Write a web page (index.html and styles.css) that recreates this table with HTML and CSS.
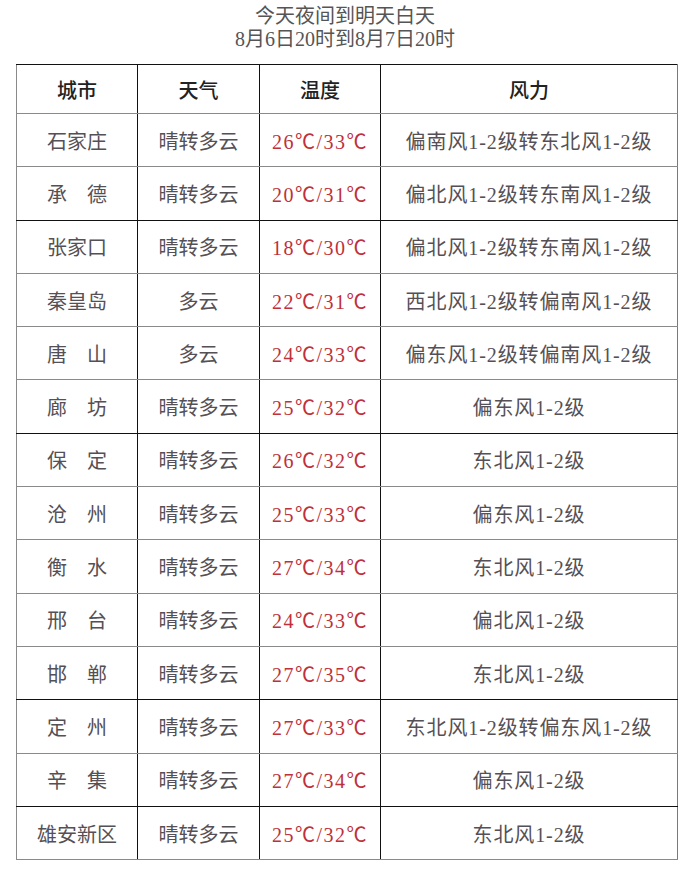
FILE: index.html
```html
<!DOCTYPE html>
<html lang="zh-CN">
<head>
<meta charset="utf-8">
<title>天气预报</title>
<link rel="stylesheet" href="styles.css">
</head>
<body>
<div class="title">
  <div class="line">今天夜间到明天白天</div>
  <div class="line">8月6日20时到8月7日20时</div>
</div>
<table class="wx">
  <colgroup><col class="c1"><col class="c2"><col class="c3"><col class="c4"></colgroup>
  <thead>
    <tr class="head"><th>城市</th><th>天气</th><th>温度</th><th>风力</th></tr>
  </thead>
  <tbody>
    <tr><td>石家庄</td><td>晴转多云</td><td class="t">26℃/33℃</td><td class="w">偏南风1-2级转东北风1-2级</td></tr>
    <tr class="dk"><td>承　德</td><td>晴转多云</td><td class="t">20℃/31℃</td><td class="w">偏北风1-2级转东南风1-2级</td></tr>
    <tr><td>张家口</td><td>晴转多云</td><td class="t">18℃/30℃</td><td class="w">偏北风1-2级转东南风1-2级</td></tr>
    <tr><td>秦皇岛</td><td>多云</td><td class="t">22℃/31℃</td><td class="w">西北风1-2级转偏南风1-2级</td></tr>
    <tr><td>唐　山</td><td>多云</td><td class="t">24℃/33℃</td><td class="w">偏东风1-2级转偏南风1-2级</td></tr>
    <tr class="dk"><td>廊　坊</td><td>晴转多云</td><td class="t">25℃/32℃</td><td class="w">偏东风1-2级</td></tr>
    <tr><td>保　定</td><td>晴转多云</td><td class="t">26℃/32℃</td><td class="w">东北风1-2级</td></tr>
    <tr><td>沧　州</td><td>晴转多云</td><td class="t">25℃/33℃</td><td class="w">偏东风1-2级</td></tr>
    <tr><td>衡　水</td><td>晴转多云</td><td class="t">27℃/34℃</td><td class="w">东北风1-2级</td></tr>
    <tr><td>邢　台</td><td>晴转多云</td><td class="t">24℃/33℃</td><td class="w">偏北风1-2级</td></tr>
    <tr class="dk"><td>邯　郸</td><td>晴转多云</td><td class="t">27℃/35℃</td><td class="w">东北风1-2级</td></tr>
    <tr><td>定　州</td><td>晴转多云</td><td class="t">27℃/33℃</td><td class="w">东北风1-2级转偏东风1-2级</td></tr>
    <tr class="dk"><td>辛　集</td><td>晴转多云</td><td class="t">27℃/34℃</td><td class="w">偏东风1-2级</td></tr>
    <tr><td>雄安新区</td><td>晴转多云</td><td class="t">25℃/32℃</td><td class="w">东北风1-2级</td></tr>
  </tbody>
</table>
</body>
</html>
```

FILE: styles.css
```css
html, body {
  margin: 0;
  padding: 0;
  background: #ffffff;
}
body {
  font-family: "Liberation Serif", "Noto Sans CJK SC", serif;
  color: #555055;
}
.title {
  height: 64px;
  padding-top: 5px;
  box-sizing: border-box;
  text-align: center;
  font-size: 20px;
  line-height: 23px;
  color: #555;
}
.wx {
  margin-left: 16px;
  width: 661px;
  border-collapse: collapse;
  table-layout: fixed;
  font-size: 20px;
}
.c1 { width: 121px; }
.c2 { width: 122px; }
.c3 { width: 121px; }
.c4 { width: 297px; }
.wx th, .wx td {
  text-align: center;
  vertical-align: middle;
  padding: 0;
  border-left: 1.5px solid #111;
  border-right: 1.5px solid #111;
  border-top: 1px solid #8a8a8a;
  border-bottom: 1px solid #8a8a8a;
  white-space: nowrap;
}
.wx th:first-child, .wx td:first-child { border-left: 1px solid #8a8a8a; }
.wx th:last-child, .wx td:last-child { border-right: 1.5px solid #7a7a7a; }
.head th {
  height: 48px;
  border-top: 1.5px solid #111;
  font-weight: 500;
  color: #222;
}
.wx tbody tr { height: 53.3px; }
.wx tbody tr.dk td { border-bottom: 1.5px solid #111; }
.wx td.t {
  color: #c0303a;
  letter-spacing: 1.5px;
}
.wx td.w {
  letter-spacing: 0.9px;
}
```
